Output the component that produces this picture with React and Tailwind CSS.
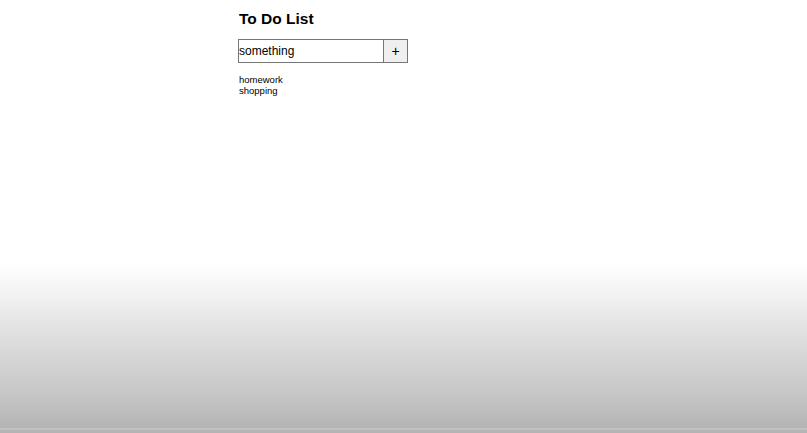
import React, { useState } from "react";

const App = () => {
  const [text, setText] = useState("something");
  const [items, setItems] = useState(["homework", "shopping"]);

  const addItem = () => {
    if (!text.trim()) return;
    setItems([...items, text]);
    setText("");
  };

  return (
    <div className="w-[807px] h-[433px] flex flex-col bg-white overflow-hidden font-['Liberation_Sans',Arial,sans-serif] text-black">
      <div className="flex-1 pl-[239px] pt-[10px]">
        <h1 className="text-[15.5px] leading-[18px] font-bold">To Do List</h1>
        <div className="mt-[11px] flex">
          <input
            value={text}
            onChange={(e) => setText(e.target.value)}
            className="w-[146px] h-[24px] -ml-px border border-[#767676] px-0 text-[12px] leading-[22px] outline-none bg-white"
          />
          <button
            onClick={addItem}
            className="w-[24px] h-[24px] border border-l-0 border-[#767676] bg-[#efefef] text-[14px] leading-[20px] flex items-center justify-center"
          >
            +
          </button>
        </div>
        <ul className="mt-[11px] text-[9.5px] leading-[11px]">
          {items.map((item) => (
            <li key={item}>{item}</li>
          ))}
        </ul>
      </div>
      <div className="h-[166px] bg-[linear-gradient(to_bottom,#ffffff_0%,#f2f2f2_20%,#e2e2e2_40%,#d4d4d4_60%,#c6c6c6_80%,#b4b4b4_100%)]" />
      <div className="h-[2px] bg-[#c2c2c2]" />
      <div className="h-[3px] bg-[#b4b4b4]" />
    </div>
  );
};

export default App;
